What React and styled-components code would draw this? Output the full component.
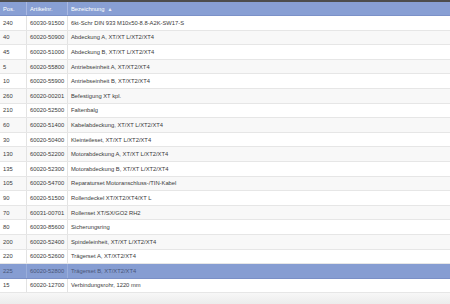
import React from "react";
import styled, { createGlobalStyle } from "styled-components";

const GlobalStyle = createGlobalStyle`
  html, body {
    margin: 0;
    padding: 0;
    background: #f1f1f1;
  }
  body {
    font-family: "Liberation Sans", Arial, sans-serif;
  }
`;

const rows = [
  ["240", "60030-91500", "6kt-Schr DIN 933 M10x50-8.8-A2K-SW17-S"],
  ["40", "60020-50900", "Abdeckung A, XT/XT L/XT2/XT4"],
  ["45", "60020-51000", "Abdeckung B, XT/XT L/XT2/XT4"],
  ["5", "60020-55800", "Antriebseinheit A, XT/XT2/XT4"],
  ["10", "60020-55900", "Antriebseinheit B, XT/XT2/XT4"],
  ["260", "60020-00201", "Befestigung XT kpl."],
  ["210", "60020-52500", "Faltenbalg"],
  ["60", "60020-51400", "Kabelabdeckung, XT/XT L/XT2/XT4"],
  ["30", "60020-50400", "Kleinteileset, XT/XT L/XT2/XT4"],
  ["130", "60020-52200", "Motorabdeckung A, XT/XT L/XT2/XT4"],
  ["135", "60020-52300", "Motorabdeckung B, XT/XT L/XT2/XT4"],
  ["105", "60020-54700", "Reparaturset Motoranschluss-/TIN-Kabel"],
  ["90", "60020-51500", "Rollendeckel XT/XT2/XT4/XT L"],
  ["70", "60031-00701", "Rollenset XT/SX/GO2 RH2"],
  ["80", "60030-85600", "Sicherungsring"],
  ["200", "60020-52400", "Spindeleinheit, XT/XT L/XT2/XT4"],
  ["220", "60020-52600", "Trägerset A, XT/XT2/XT4"],
  ["225", "60020-52800", "Trägerset B, XT/XT2/XT4"],
  ["15", "60020-12700", "Verbindungsrohr, 1220 mm"],
];

const Grid = styled.div`
  width: 450px;
  border-top: 2px solid #4d4d4d;
  background: #fff;
  font-size: 5.8px;
`;

const HeaderRow = styled.div`
  display: grid;
  grid-template-columns: 27px 41px 1fr;
  height: 14px;
  background: #889fd4;
  border-bottom: 1px solid #7b91c8;
  box-sizing: border-box;
`;

const HeaderCell = styled.div`
  display: flex;
  align-items: center;
  gap: 3px;
  padding-left: 3px;
  color: #fff;
  border-right: 1px solid ${({ $last }) => ($last ? "transparent" : "#a9b8e2")};
`;

const SortArrow = styled.span`
  font-size: 5px;
  color: #e8ecf8;
`;

const Row = styled.div`
  display: grid;
  grid-template-columns: 27px 41px 1fr;
  height: 14.6px;
  box-sizing: border-box;
  border-bottom: 1px solid ${({ $selected }) => ($selected ? "#7a8fc6" : "#e6e6e6")};
  background: ${({ $selected, $odd }) =>
    $selected ? "#869dd2" : $odd ? "#f8f8f8" : "#ffffff"};
`;

const Cell = styled.div`
  display: flex;
  align-items: center;
  padding-left: 3px;
  white-space: nowrap;
  overflow: hidden;
  color: ${({ $selected }) => ($selected ? "#4a5678" : "#3a3a3a")};
  border-right: 1px solid ${({ $last, $selected }) =>
    $last ? "transparent" : $selected ? "#9aaedb" : "#e3e3e3"};
`;

const Footer = styled.div`
  height: 11px;
  background: linear-gradient(#f7f7f7, #ececec);
`;

export default function App() {
  return (
    <>
      <GlobalStyle />
      <Grid>
        <HeaderRow>
          <HeaderCell>Pos.</HeaderCell>
          <HeaderCell>Artikelnr.</HeaderCell>
          <HeaderCell $last>
            Bezeichnung <SortArrow>▲</SortArrow>
          </HeaderCell>
        </HeaderRow>
        {rows.map(([pos, nr, name], i) => {
          const selected = pos === "225";
          return (
            <Row key={nr} $odd={i % 2 === 1} $selected={selected}>
              <Cell $selected={selected}>{pos}</Cell>
              <Cell $selected={selected}>{nr}</Cell>
              <Cell $selected={selected} $last>
                {name}
              </Cell>
            </Row>
          );
        })}
      </Grid>
      <Footer />
    </>
  );
}
